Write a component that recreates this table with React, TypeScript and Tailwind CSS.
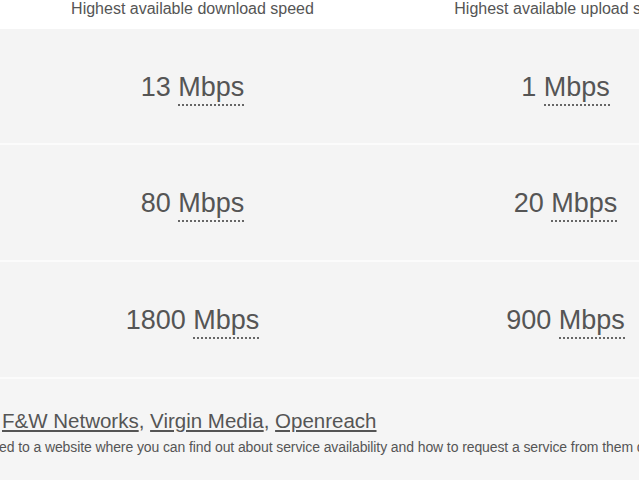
const rows = [
  { down: "13", up: "1" },
  { down: "80", up: "20" },
  { down: "1800", up: "900" },
];

function Speed({ value }: { value: string }) {
  return (
    <span className="text-[27px] leading-none text-[#555]">
      {value}{" "}
      <span className="border-b-2 border-dotted border-[#666] pb-[2px]">Mbps</span>
    </span>
  );
}

export default function App() {
  return (
    <div className="w-[639px] h-[480px] overflow-hidden bg-[#f5f5f5] font-['Liberation_Sans',Arial,sans-serif] text-[#555]">
      {/* column headings */}
      <div className="bg-white h-[29px] pl-[6px] flex whitespace-nowrap">
        <div className="w-[373px] shrink-0 text-center text-[16px] leading-[17px]">
          Highest available download speed
        </div>
        <div className="w-[373px] shrink-0 text-center text-[16px] leading-[17px]">
          Highest available upload speed
        </div>
      </div>

      {rows.map((r, i) => (
        <div
          key={r.down}
          className={`${i === 0 ? "h-[116px]" : "h-[117px]"} bg-[#f4f4f4] border-b-2 border-[#fbfbfb] pl-[6px] pt-[4px] flex items-center whitespace-nowrap`}
        >
          <div className="w-[373px] shrink-0 text-center">
            <Speed value={r.down} />
          </div>
          <div className="w-[373px] shrink-0 text-center">
            <Speed value={r.up} />
          </div>
        </div>
      ))}

      {/* providers */}
      <div className="pt-[30px] whitespace-nowrap">
        <p className="text-[20.5px] leading-[24px] pl-[2px]">
          <a href="#" className="underline underline-offset-2">F&amp;W Networks</a>,{" "}
          <a href="#" className="underline underline-offset-2">Virgin Media</a>,{" "}
          <a href="#" className="underline underline-offset-2">Openreach</a>
        </p>
        <p className="text-[14px] leading-[16px] mt-[6px] -ml-[1px] tracking-[-0.1px]">
          ed to a website where you can find out about service availability and how to request a service from them directly.
        </p>
      </div>
    </div>
  );
}
